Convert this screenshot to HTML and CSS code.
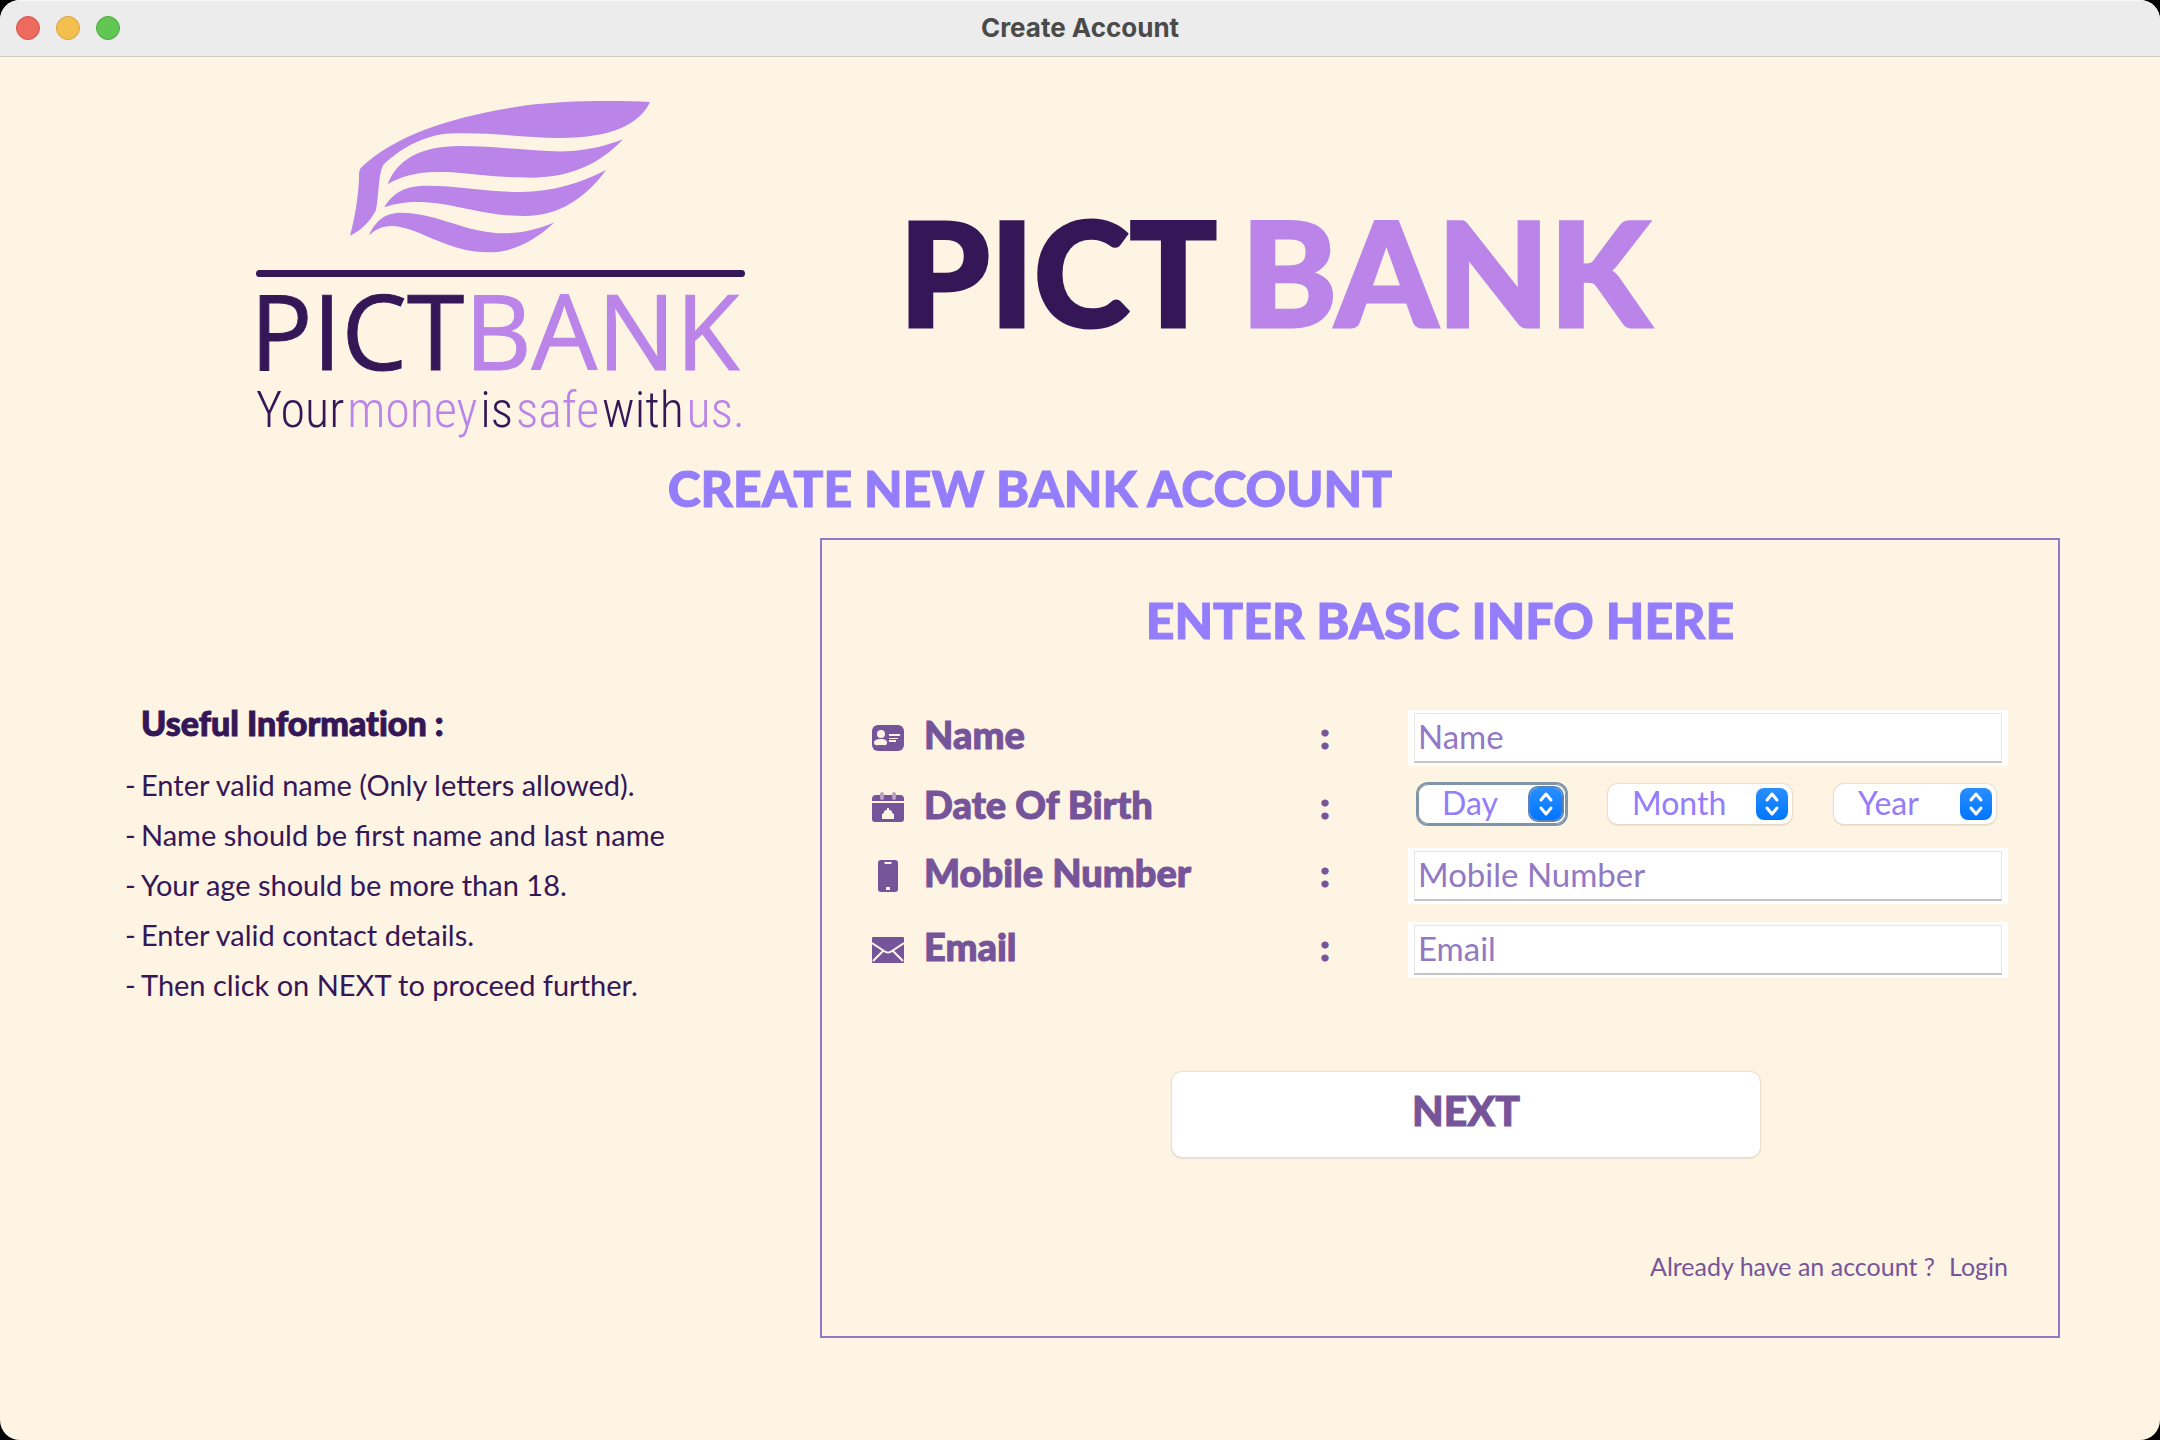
FILE: index.html
```html
<!DOCTYPE html>
<html lang="en">
<head>
<meta charset="utf-8">
<title>Create Account</title>
<link rel="stylesheet" href="styles.css">
</head>
<body>
<div class="window">
  <header class="titlebar">
    <div class="lights">
      <button class="light close" type="button" aria-label="Close"></button>
      <button class="light minimise" type="button" aria-label="Minimise"></button>
      <button class="light zoom" type="button" aria-label="Zoom"></button>
    </div>
    <span class="titlebar-text">Create Account</span>
  </header>

  <main class="content">
    <div class="brand">
      <div class="logo">
        <svg class="wing" viewBox="330 60 903 459" aria-hidden="true">
          <path d="M1230 66C1120 60 960 62 860 76C650 106 470 160 362 264C356 275 357 285 357 300C354 350 346 410 330 467C365 450 390 425 408 390C418 335 414 285 430 254C490 200 560 160 650 160C760 158 850 172 960 174C1120 174 1200 130 1230 66Z"/>
          <path d="M443 313C470 240 540 198 660 198C780 198 880 216 980 214C1050 211 1100 196 1149 178C1080 252 990 292 880 293C740 293 680 275 590 276C530 276 480 290 443 313Z"/>
          <path d="M433 382C460 335 500 317 560 317C660 317 740 336 840 336C940 335 1020 310 1098 270C1040 350 960 408 855 408C720 408 640 366 530 366C500 366 465 370 433 382Z"/>
          <path d="M387 466C410 415 440 398 485 398C590 398 680 461 800 460C850 459 900 446 944 427C880 485 820 517 745 517C620 517 530 438 455 438C425 438 405 450 387 466Z"/>
        </svg>
        <div class="logo-rule"></div>
        <div class="logo-name"><span>PICT</span><span class="lilac">BANK</span></div>
        <div class="logo-tagline">
          <span>Your</span><span class="lilac">money</span><span>is</span><span class="lilac">safe</span><span>with</span><span class="lilac">us.</span>
        </div>
      </div>
      <h1 class="wordmark"><span>PICT</span><span class="lilac">BANK</span></h1>
    </div>

    <h2 class="heading">CREATE NEW BANK ACCOUNT</h2>

    <div class="columns">
      <aside class="info">
        <h3 class="info-title">Useful Information :</h3>
        <ul class="info-list">
          <li>Enter valid name (Only letters allowed).</li>
          <li>Name should be first name and last name</li>
          <li>Your age should be more than 18.</li>
          <li>Enter valid contact details.</li>
          <li>Then click on NEXT to proceed further.</li>
        </ul>
      </aside>

      <form class="panel">
        <h2 class="heading panel-heading">ENTER BASIC INFO HERE</h2>

        <div class="fields">
          <div class="row">
            <svg class="icon" viewBox="0 0 32 32" aria-hidden="true">
              <rect class="ink" x="0" y="3" width="32" height="26" rx="6"/>
              <circle class="cut" cx="9" cy="12" r="4"/>
              <path class="cut" d="M2 21c0-3 3-4 7-4s6 1 6 4-3 2-6 2-7 1-7-2zM17 12h11v2H17zM17 16h9v1H17zM17 18h7v2H17z"/>
            </svg>
            <label for="name">Name</label>
            <span class="colon">:</span>
            <span class="box"><input id="name" type="text" placeholder="Name"></span>
          </div>

          <div class="row dob">
            <svg class="icon" viewBox="0 0 32 32" aria-hidden="true">
              <path class="ink" d="M4 3h24q4 0 4 4v2H0V7q0-4 4-4zM0 11h32v16q0 3-3 3H3q-3 0-3-3z"/>
              <path class="peg" d="M10 2v4M22 2v4"/>
              <path class="cut" d="M10 27v-4q0-2 2-2v-1q0-2 3-2v-2h2v2q3 0 3 2v1q2 0 2 2v4z"/>
            </svg>
            <label for="day">Date Of Birth</label>
            <span class="colon">:</span>
            <div class="selects">
              <span class="select focused day">
                <select id="day"><option>Day</option></select>
                <svg class="arrows" viewBox="0 0 32 32" aria-hidden="true"><path d="M11 12l5-6 5 6M11 20l5 6 5-6"/></svg>
              </span>
              <span class="select month">
                <select aria-label="Month"><option>Month</option></select>
                <svg class="arrows" viewBox="0 0 32 32" aria-hidden="true"><path d="M11 12l5-6 5 6M11 20l5 6 5-6"/></svg>
              </span>
              <span class="select year">
                <select aria-label="Year"><option>Year</option></select>
                <svg class="arrows" viewBox="0 0 32 32" aria-hidden="true"><path d="M11 12l5-6 5 6M11 20l5 6 5-6"/></svg>
              </span>
            </div>
          </div>

          <div class="row">
            <svg class="icon" viewBox="0 0 32 32" aria-hidden="true">
              <rect class="ink" x="6" y="0" width="20" height="32" rx="3"/>
              <path class="cut" d="M12 2h8l-1 2h-6zM14 27h4v3h-4z"/>
            </svg>
            <label for="mobile">Mobile Number</label>
            <span class="colon">:</span>
            <span class="box"><input id="mobile" type="tel" placeholder="Mobile Number"></span>
          </div>

          <div class="row">
            <svg class="icon" viewBox="0 0 32 32" aria-hidden="true">
              <rect class="ink" x="0" y="3" width="32" height="26" rx="1"/>
              <path class="crease" d="M0 9l12 8q4 3 8 0l12-8M1 27l10-10M31 27L21 17"/>
            </svg>
            <label for="email">Email</label>
            <span class="colon">:</span>
            <span class="box"><input id="email" type="email" placeholder="Email"></span>
          </div>
        </div>

        <button class="next" type="submit">NEXT</button>

        <p class="login"><span>Already have an account ?</span><a href="#login">Login</a></p>
      </form>
    </div>
  </main>
</div>
</body>
</html>
```
FILE: styles.css
```css
* {
  box-sizing: border-box;
}

body {
  margin: 0;
  background: #000;
  font-family: Lato, "Open Sans", sans-serif;
  color: #351757;
}

h1, h2, h3, p, ul {
  margin: 0;
  padding: 0;
}

.window {
  display: flex;
  flex-direction: column;
  min-height: 100vh;
  border-radius: 20px;
  overflow: hidden;
  background: #fef4e4;
}

/* Title bar */
.titlebar {
  display: grid;
  grid-template-columns: 1fr auto 1fr;
  align-items: center;
  height: 57px;
  padding: 0 16px 2px;
  background: #ececec;
  border-top: 1px solid #f8f8f8;
  border-bottom: 1px solid #d3cabd;
}

.lights {
  display: flex;
  gap: 16px;
}

.light {
  width: 24px;
  height: 24px;
  padding: 0;
  border: 1px solid;
  border-radius: 50%;
}

.close { background: #ec6a5e; border-color: #d35549; }
.minimise { background: #f4bf4f; border-color: #d8a13c; }
.zoom { background: #61c554; border-color: #4fa73f; }

.titlebar-text {
  font: 700 26px/32px Inter, sans-serif;
  color: #4a4a4a;
}

/* Brand */
.content {
  display: flex;
  flex-direction: column;
  padding: 43px 100px 100px 0;
}

.brand {
  display: flex;
  gap: 154px;
  padding-left: 256px;
}

.lilac {
  color: #ba84e8;
}

.logo {
  display: flex;
  flex-direction: column;
  width: 489px;
  height: 344px;
}

.wing {
  width: 301px;
  height: 153px;
  margin-left: 94px;
  fill: #ba84e8;
}

.logo-rule {
  height: 7px;
  margin-top: 17px;
  border-radius: 4px;
  background: #351757;
}

.logo-name {
  margin: 3px 0 0 -6px;
  font: 400 104px/100px "Open Sans", sans-serif;
  -webkit-text-stroke: 1px;
  white-space: nowrap;
}

.logo-tagline {
  display: flex;
  justify-content: space-between;
  font: 300 50px/60px "Roboto Condensed", Roboto, sans-serif;
}

.wordmark {
  display: flex;
  gap: 24px;
  padding-top: 86px;
  font-size: 145px;
  font-weight: 900;
  line-height: 170px;
  -webkit-text-stroke: 3px;
}

.heading {
  font-size: 50px;
  font-weight: 900;
  line-height: 60px;
  text-align: center;
  color: #947dfb;
  -webkit-text-stroke: 1px;
}

.content > .heading {
  margin: 14px 0 20px;
}

/* Two columns below the heading */
.columns {
  display: grid;
  grid-template-columns: 820fr 1240fr;
}

.info {
  padding: 165px 0 0 141px;
}

.info-title {
  font-size: 34px;
  font-weight: 900;
  line-height: 40px;
  font-variant-ligatures: none;
  -webkit-text-stroke: 1px;
}

.info-list {
  margin-top: 17px;
  list-style: none;
  font-size: 29px;
  line-height: 50px;
}

.info-list li::before {
  content: "-";
  display: inline-block;
  width: 16px;
  margin-left: -16px;
}

.panel {
  display: flex;
  flex-direction: column;
  min-height: 800px;
  padding: 50px;
  border: 2px solid #9279c4;
  color: #76549a;
}

.fields {
  display: flex;
  flex-direction: column;
  gap: 18px;
  margin-top: 60px;
}

.row {
  display: grid;
  grid-template-columns: 52px 1fr 88px 600px;
  align-items: center;
  height: 56px;
}

.dob {
  height: 46px;
}

.icon {
  width: 32px;
  height: 32px;
}

.ink { fill: #76549a; }
.cut { fill: #fef4e4; }
.peg { stroke: #b9a2c0; stroke-width: 4; stroke-linecap: round; }
.crease { fill: none; stroke: #fef4e4; stroke-width: 2; }

.row label,
.colon {
  padding-bottom: 8px;
  font-size: 38px;
  font-weight: 900;
  line-height: 40px;
  -webkit-text-stroke: 1px;
}

.box {
  padding: 3px 6px;
  background: #fff;
}

.box input {
  display: block;
  width: 100%;
  height: 50px;
  padding: 0 3px 3px;
  border: 1px solid #e6e6e6;
  border-bottom: 2px solid #c4c4c4;
  background: #fff;
  font: 400 33px/40px Lato, sans-serif;
  color: #351757;
}

.box input::placeholder {
  color: #9279c4;
  opacity: 1;
}

.selects {
  display: flex;
  align-self: start;
  gap: 42px;
  padding-left: 10px;
}

.select {
  position: relative;
  height: 40px;
  border-radius: 10px;
  background: #fff;
  box-shadow: 0 0 1px 1px #eadfce, 0 1px 2px #bdb5a8;
}

.day { width: 148px; }
.month { width: 184px; }
.year { width: 162px; }

.select select {
  width: 100%;
  height: 37px;
  padding: 0 0 0 24px;
  border: 0;
  background: none;
  appearance: none;
  font: 400 32px/36px Lato, sans-serif;
  color: #947dfb;
}

.arrows {
  position: absolute;
  top: 4px;
  right: 4px;
  width: 32px;
  height: 32px;
  border-radius: 8px;
  background: linear-gradient(#2a8eff, #0076ff);
  fill: none;
  stroke: #fff;
  stroke-width: 3;
  stroke-linecap: round;
  stroke-linejoin: round;
  pointer-events: none;
}

.focused {
  box-shadow: 0 0 0 2px #8095a8, inset 0 0 0 1px #8095a8;
}

.focused .arrows {
  box-shadow: 0 0 0 2px #5d83b5;
}

.next {
  width: 588px;
  height: 85px;
  margin: 94px 0 0 300px;
  padding: 0 0 8px;
  border: 0;
  border-radius: 10px;
  background: #fff;
  box-shadow: 0 0 1px 1px #ece0cf, 0 1px 2px #bdb5a8;
  font: 900 41px/48px Lato, sans-serif;
  color: #76549a;
  -webkit-text-stroke: 1px;
}

.login {
  display: flex;
  justify-content: flex-end;
  gap: 14px;
  margin-top: 93px;
  font-size: 25px;
  line-height: 32px;
}

.login a {
  color: inherit;
  text-decoration: none;
}
```
